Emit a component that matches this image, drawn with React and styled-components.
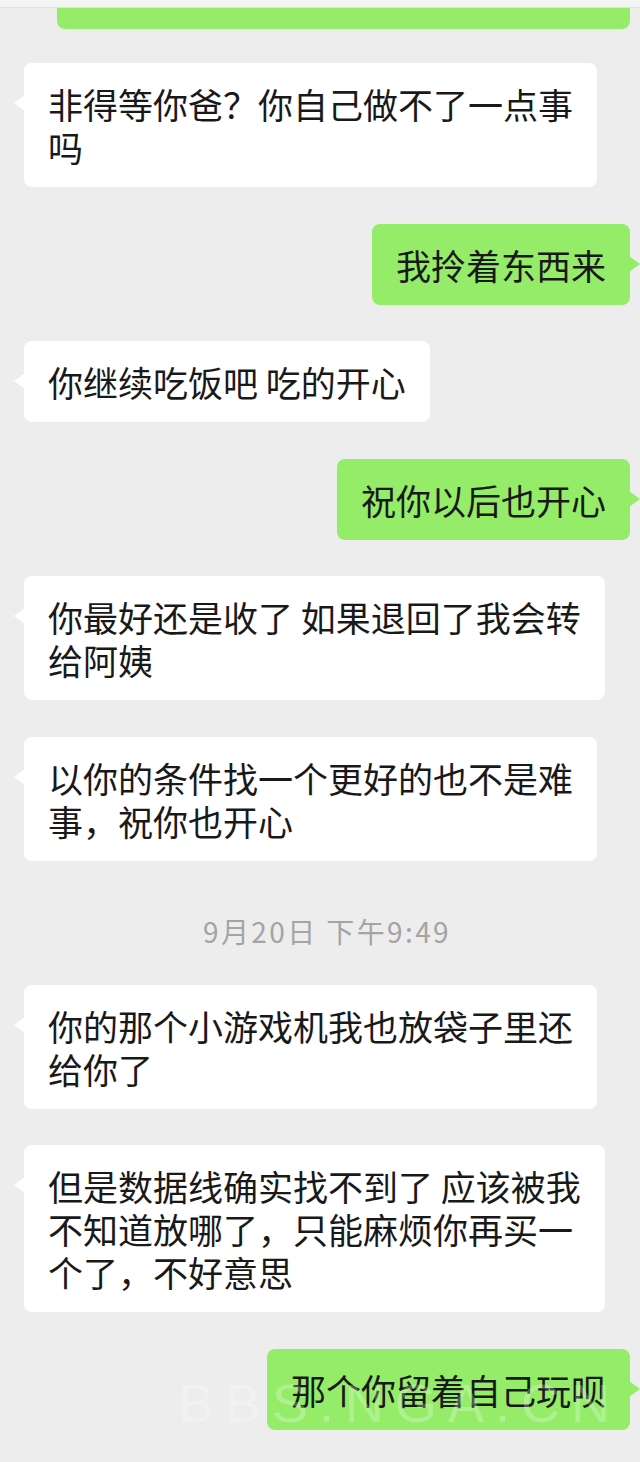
import React from 'react';
import styled, { createGlobalStyle, css } from 'styled-components';

const GlobalStyle = createGlobalStyle`
  html, body {
    margin: 0;
    padding: 0;
    background: #ededed;
  }
  * {
    box-sizing: border-box;
  }
`;

const Screen = styled.div`
  position: relative;
  width: 640px;
  min-height: 100vh;
  overflow: hidden;
  background: #ededed;
  font-family: "Noto Sans CJK SC", "Noto Sans", sans-serif;
`;

// thin strip of the nav bar still showing at the very top
const TopBar = styled.div`
  position: absolute;
  top: 0;
  left: 0;
  right: 0;
  height: 8px;
  background: #f4f4f4;
  border-bottom: 1px solid #e1e1e1;
  z-index: 2;
`;

const ChatList = styled.div`
  display: flex;
  flex-direction: column;
  gap: 36.5px;
  padding: 0 10px 40px 24px;
`;

const Row = styled.div`
  display: flex;
  justify-content: ${(p) => (p.$mine ? 'flex-end' : 'flex-start')};
`;

const Bubble = styled.div`
  position: relative;
  max-width: 596px;
  padding: 19px 24px;
  border-radius: 8px;
  background: ${(p) => (p.$mine ? '#95ec69' : '#ffffff')};
  color: #191919;
  font-size: 35px;
  line-height: 43px;
  white-space: pre;

  &::before {
    content: '';
    position: absolute;
    top: 32px;
    width: 0;
    height: 0;
    border-style: solid;
    ${(p) =>
      p.$mine
        ? css`
            right: -10px;
            border-width: 8px 0 8px 11px;
            border-color: transparent transparent transparent #95ec69;
          `
        : css`
            left: -10px;
            border-width: 8px 11px 8px 0;
            border-color: transparent #ffffff transparent transparent;
          `}
  }

  ${(p) =>
    p.$clipped &&
    css`
      width: 573px;
      height: 29px;
      margin-bottom: -2.5px;
      padding: 0;
      border-radius: 0 0 8px 8px;
      &::before {
        display: none;
      }
    `}
`;

const TimeRow = styled.div`
  height: 51px;
  display: flex;
  align-items: flex-end;
  justify-content: center;
`;

const TimeLabel = styled.span`
  font-size: 28px;
  line-height: 34px;
  letter-spacing: 2.4px;
  color: #a4a4a4;
`;

const Watermark = styled.div`
  position: absolute;
  left: 178px;
  top: 1372px;
  font-family: "Liberation Sans", Arial, sans-serif;
  font-size: 54px;
  letter-spacing: 11px;
  color: rgba(255, 255, 255, 0.26);
  pointer-events: none;
  z-index: 1;
`;

const messages = [
  { mine: true, clipped: true, text: '' },
  { text: '非得等你爸？你自己做不了一点事\n吗' },
  { mine: true, text: '我拎着东西来' },
  { text: '你继续吃饭吧 吃的开心' },
  { mine: true, text: '祝你以后也开心' },
  { text: '你最好还是收了 如果退回了我会转\n给阿姨' },
  { text: '以你的条件找一个更好的也不是难\n事，祝你也开心' },
  { time: '9月20日 下午9:49' },
  { text: '你的那个小游戏机我也放袋子里还\n给你了' },
  { text: '但是数据线确实找不到了 应该被我\n不知道放哪了，只能麻烦你再买一\n个了，不好意思' },
  { mine: true, text: '那个你留着自己玩呗' },
];

export default function App() {
  return (
    <Screen>
      <GlobalStyle />
      <TopBar />
      <ChatList>
        {messages.map((m, i) =>
          m.time ? (
            <TimeRow key={i}>
              <TimeLabel>{m.time}</TimeLabel>
            </TimeRow>
          ) : (
            <Row key={i} $mine={m.mine}>
              <Bubble $mine={m.mine} $clipped={m.clipped}>
                {m.text}
              </Bubble>
            </Row>
          )
        )}
      </ChatList>
      <Watermark>BBS.NGA.CN</Watermark>
    </Screen>
  );
}
